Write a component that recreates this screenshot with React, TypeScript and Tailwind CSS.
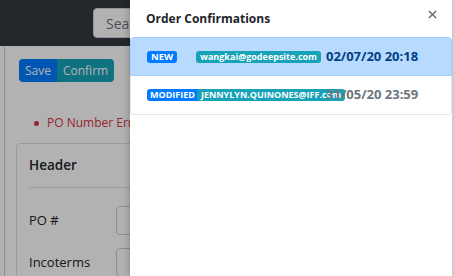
export default function App() {
  return (
    <div className="relative w-[454px] h-[276px] overflow-hidden bg-white font-['Open_Sans',sans-serif]">
      {/* page behind the drawer */}
      <div className="flex flex-col h-full">
        <div className="h-[46px] bg-[#343a40] flex items-center pl-[93px] shrink-0">
          <div className="h-[30px] w-[120px] bg-white rounded border border-gray-300 flex items-center px-3 text-[14px] text-[#6c757d]">
            Search
          </div>
        </div>
        <div className="flex-1 ml-[4px] border-l border-[#ccc] pl-[11px] pt-[13px]">
          <div className="flex ml-[3px]">
            <button className="h-[23px] px-[6px] text-[12px] text-white bg-[#007bff] rounded-l">Save</button>
            <button className="h-[23px] px-[6px] text-[12px] text-white bg-[#17a2b8] rounded-r">Confirm</button>
          </div>
          <ul className="mt-[32px] pl-[18px] text-[12px] text-[#dc3545]">
            <li className="flex items-center gap-[8px]">
              <span className="w-[5px] h-[5px] rounded-full bg-[#dc3545]" />
              PO Number Error
            </li>
          </ul>
          <div className="mt-[11px] border border-[#ddd] rounded w-[300px] px-[12px]">
            <div className="h-[44px] flex items-center border-b border-[#ddd] text-[13.5px] font-semibold text-[#212529]">
              Header
            </div>
            <div className="h-[43px] mt-[11px] flex items-center text-[13px] text-[#212529]">
              <span className="w-[87px]">PO #</span>
              <div className="h-[29px] w-[150px] border border-[#ccc] rounded" />
            </div>
            <div className="h-[43px] -mt-[1px] flex items-center text-[13px] text-[#212529]">
              <span className="w-[87px]">Incoterms</span>
              <div className="h-[29px] w-[150px] border border-[#ccc] rounded" />
            </div>
          </div>
        </div>
      </div>

      {/* backdrop */}
      <div className="absolute inset-0 bg-black/30" />

      {/* drawer */}
      <div className="absolute top-0 bottom-0 right-0 w-[324px] bg-white shadow-[-2px_0_6px_rgba(0,0,0,0.2)] border-r-2 border-[#ccc]">
        <div className="h-[37px] flex items-center justify-between pl-[16px] pr-[15px]">
          <span className="text-[12px] font-bold text-[#212529]">Order Confirmations</span>
          <svg width="9" height="9" viewBox="0 0 10 10" className="mt-[-8px]">
            <path d="M1 1L9 9M9 1L1 9" stroke="#666" strokeWidth="1.5" />
          </svg>
        </div>
        <div className="flex flex-col">
          <div className="h-[39px] flex items-center pl-[16px] bg-[#b8daff] border border-[#9fcdff] rounded-t">
            <span className="px-[4px] h-[12px] leading-[12px] rounded-[3px] bg-[#007bff] text-white text-[9.5px] font-bold">NEW</span>
            <span className="ml-[19px] px-[4px] h-[12px] leading-[12px] rounded-[3px] bg-[#17a2b8] text-white text-[9px] font-bold">wangkai@godeepsite.com</span>
            <span className="ml-[5px] text-[13px] font-bold text-[#004085]">02/07/20 20:18</span>
          </div>
          <div className="h-[39px] flex items-center pl-[16px] bg-white border border-t-0 border-[#e5e5e5] rounded-b">
            <span className="pl-[3px] pr-[6px] h-[12px] leading-[12px] rounded-[3px] bg-[#007bff] text-white text-[9px] font-bold">MODIFIED</span>
            <span className="ml-[-4px] px-[4px] h-[12px] leading-[12px] rounded-[3px] bg-[#17a2b8] text-white text-[9px] font-bold">JENNYLYN.QUINONES@IFF.com</span>
            <span className="ml-[-19px] text-[13px] font-bold text-[#6c757d]">31/05/20 23:59</span>
          </div>
        </div>
      </div>
    </div>
  );
}
